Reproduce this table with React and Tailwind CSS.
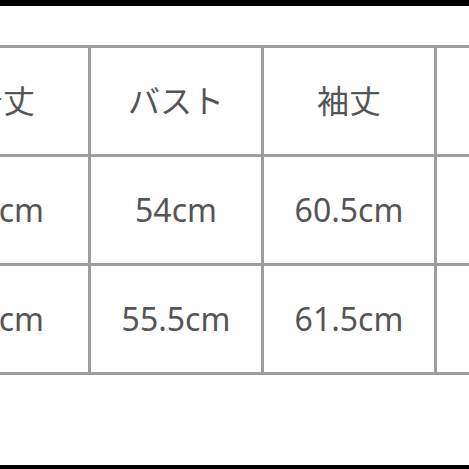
const rows = [
  ["着丈", "バスト", "袖丈", ""],
  ["66cm", "54cm", "60.5cm", ""],
  ["68cm", "55.5cm", "61.5cm", ""],
];

export default function App() {
  return (
    <div className="w-[469px] h-[469px] overflow-hidden bg-white flex flex-col" style={{ fontFamily: '"Noto Sans", "Noto Sans CJK JP", sans-serif' }}>
      <div className="h-[6px] bg-black shrink-0" />
      <div className="flex-1 pt-[39px]">
        <div className="ml-[-82px] w-max border-t-[3px] border-[#9d9d9d]">
          {rows.map((row, i) => (
            <div key={i} className="flex">
              {row.map((cell, j) => (
                <div
                  key={j}
                  className="w-[173px] h-[109px] shrink-0 border-r-[3px] border-b-[3px] border-[#9d9d9d] flex items-center justify-center text-[32px] text-[#555555]"
                >
                  {cell}
                </div>
              ))}
            </div>
          ))}
        </div>
      </div>
      <div className="h-[4px] bg-black shrink-0" />
    </div>
  );
}
